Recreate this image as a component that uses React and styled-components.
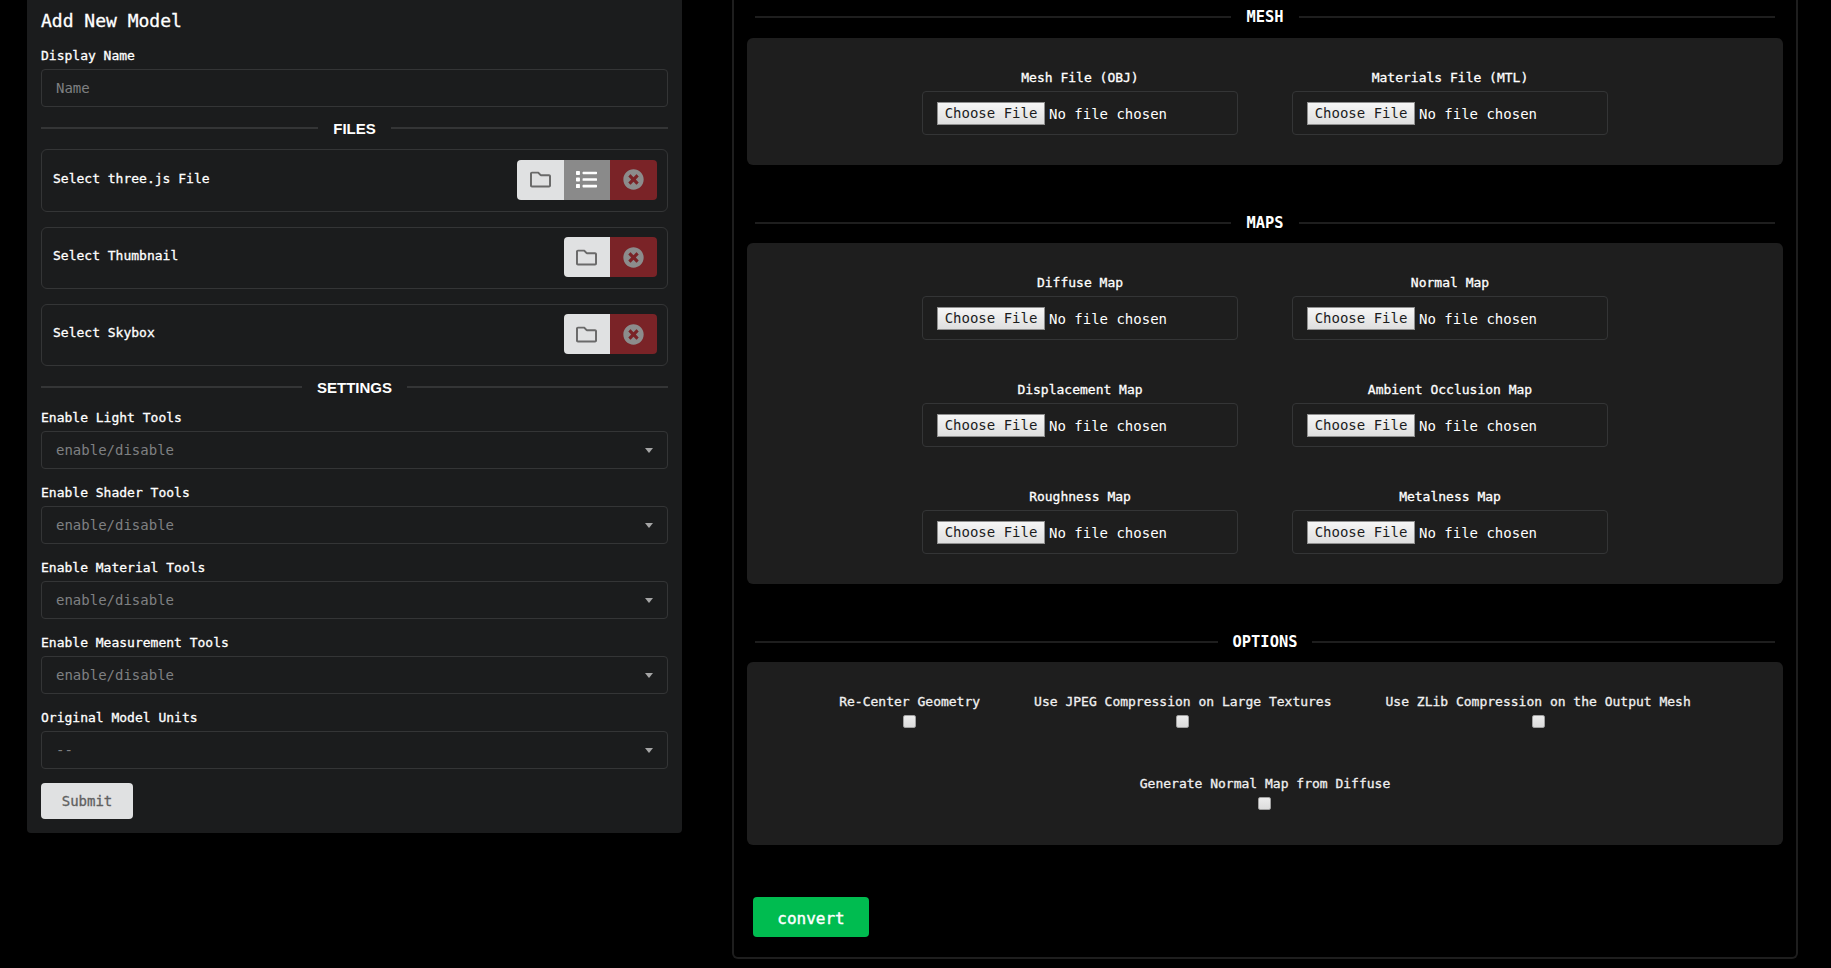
import React from "react";
import styled, { createGlobalStyle } from "styled-components";
import { FaRegFolder, FaList, FaTimesCircle } from "react-icons/fa";

const mono = `"DejaVu Sans Mono", "Liberation Mono", monospace`;

const GlobalStyle = createGlobalStyle`
  html, body {
    margin: 0;
    height: 100%;
    background: #000;
    overflow: hidden;
  }
  * {
    box-sizing: border-box;
  }
`;

const Page = styled.div`
  display: flex;
  align-items: flex-start;
  gap: 50px;
  width: 1831px;
  height: 968px;
  padding-left: 27px;
  background: #000;
  color: #fff;
  font-family: ${mono};
  font-size: 13px;
`;

const FormCard = styled.div`
  display: flex;
  flex-direction: column;
  width: 655px;
  height: 833px;
  padding: 8px 14px 14px;
  background: #1b1c1d;
  border-radius: 0 0 4px 4px;
`;

const Title = styled.h2`
  margin: 0 0 12px;
  font-size: 18px;
  line-height: 26px;
  font-weight: 400;
  -webkit-text-stroke: 0.3px #fff;
`;

const Field = styled.div`
  display: flex;
  flex-direction: column;
  margin-bottom: ${({ $gap }) => $gap ?? 14}px;
`;

const Label = styled.label`
  margin-bottom: 4px;
  padding-top: 1px;
  font-weight: 400;
  line-height: 18px;
  color: #fff;
  -webkit-text-stroke: 0.3px currentColor;
`;

const TextInput = styled.input`
  height: 38px;
  padding: 0 14px;
  background: #1b1c1d;
  border: 1px solid #343536;
  border-radius: 4px;
  color: #fff;
  font-family: ${mono};
  font-size: 14px;
  &::placeholder {
    color: #7f8082;
  }
`;

const Divider = styled.div`
  display: flex;
  align-items: center;
  gap: 15px;
  height: 18px;
  margin: ${({ $margin }) => $margin};
  &::before,
  &::after {
    content: "";
    flex: 1;
    height: 2px;
    background: ${({ $line }) => $line};
  }
`;

const DividerText = styled.span`
  font-family: ${({ $sans }) => ($sans ? `"Liberation Sans", sans-serif` : mono)};
  font-size: ${({ $sans }) => ($sans ? 15 : 15.4)}px;
  font-weight: 700;
  color: #fff;
`;

const FileRow = styled.div`
  display: flex;
  align-items: center;
  justify-content: space-between;
  height: ${({ $height }) => $height}px;
  margin-bottom: ${({ $gap }) => $gap}px;
  padding: 0 10px 2px 11px;
  border: 1px solid #343536;
  border-radius: 6px;
`;

const RowLabel = styled.span`
  padding-bottom: 3px;
  font-weight: 400;
  -webkit-text-stroke: 0.3px currentColor;
`;

const ButtonGroup = styled.div`
  display: flex;
  border-radius: 4px;
  overflow: hidden;
`;

const IconButton = styled.button`
  display: flex;
  align-items: center;
  justify-content: center;
  width: 46.7px;
  height: 40px;
  padding: 0;
  border: 0;
  font-size: 21px;
  background: ${({ $kind }) =>
    $kind === "list" ? "#8a8a8a" : $kind === "clear" ? "#7a2327" : "#e0e1e2"};
  color: ${({ $kind }) =>
    $kind === "list" ? "#fff" : $kind === "clear" ? "#8c8c8c" : "#6a6a6a"};
`;

const Select = styled.div`
  display: flex;
  align-items: center;
  justify-content: space-between;
  height: 38px;
  padding: 0 14px;
  border: 1px solid #343536;
  border-radius: 4px;
  color: #7f8082;
  font-size: 14px;
`;

const Caret = styled.span`
  width: 0;
  height: 0;
  border-left: 4px solid transparent;
  border-right: 4px solid transparent;
  border-top: 5px solid #a5a5a5;
`;

const SubmitButton = styled.button`
  width: 92px;
  height: 36px;
  padding: 0;
  background: #e0e1e2;
  border: 0;
  border-radius: 4px;
  color: #5f6060;
  font-family: ${mono};
  font-size: 14px;
  font-weight: 400;
  -webkit-text-stroke: 0.3px currentColor;
`;

const ConverterPane = styled.div`
  display: flex;
  flex-direction: column;
  width: 1066px;
  height: 959px;
  padding: 8px 13px 0;
  border: 2px solid #1e1e1e;
  border-top: 0;
  border-radius: 0 0 6px 6px;
`;

const Panel = styled.div`
  display: ${({ $wrap }) => ($wrap ? "flex" : "grid")};
  ${({ $wrap }) =>
    $wrap
      ? "flex-wrap: wrap; column-gap: 54px; row-gap: 47px;"
      : "grid-template-columns: repeat(2, 316px); column-gap: 54px; row-gap: 40px;"}
  justify-content: center;
  padding: ${({ $wrap }) => ($wrap ? "31px 0 35px" : "30px 0")};
  margin-bottom: ${({ $gap }) => $gap}px;
  background: #1e1e1e;
  border-radius: 6px;
`;

const FileField = styled.div`
  display: flex;
  flex-direction: column;
  align-items: center;
`;

const FileBox = styled.div`
  display: flex;
  align-items: center;
  align-self: stretch;
  height: 44px;
  padding: 0 14px;
  border: 1px solid #343536;
  border-radius: 4px;
`;

const FileInput = styled.input`
  width: 100%;
  color: #fff;
  font-family: ${mono};
  font-size: 14px;
  &::file-selector-button {
    width: 108px;
    height: 23px;
    margin-right: 4px;
    padding: 0;
    background: linear-gradient(#f6f6f6, #dedede);
    border: 1px solid #8f8f8f;
    border-radius: 0;
    color: #1b1c1d;
    font-family: ${mono};
    font-size: 14px;
  }
`;

const OptionField = styled.div`
  display: flex;
  flex-direction: column;
  align-items: center;
`;

const OptionLabel = styled.label`
  margin-bottom: 4px;
  font-weight: 400;
  line-height: 18px;
  color: #f0f0f0;
  -webkit-text-stroke: 0.3px currentColor;
`;

const Checkbox = styled.input`
  width: 13px;
  height: 13px;
  margin: 0;
  appearance: none;
  background: linear-gradient(#ececec, #dcdcdc);
  border: 1px solid #a0a0a0;
  border-radius: 2px;
`;

const ConvertButton = styled.button`
  align-self: flex-start;
  width: 116px;
  height: 40px;
  margin-left: 6px;
  padding: 2px 0 0;
  background: #00bc50;
  border: 0;
  border-radius: 4px;
  color: #fff;
  font-family: ${mono};
  font-size: 16px;
  font-weight: 400;
  -webkit-text-stroke: 0.4px currentColor;
`;

const SELECTS = [
  ["Enable Light Tools", "enable/disable"],
  ["Enable Shader Tools", "enable/disable"],
  ["Enable Material Tools", "enable/disable"],
  ["Enable Measurement Tools", "enable/disable"],
  ["Original Model Units", "--"],
];

const MAPS = [
  "Diffuse Map",
  "Normal Map",
  "Displacement Map",
  "Ambient Occlusion Map",
  "Roughness Map",
  "Metalness Map",
];

const OPTIONS = [
  "Re-Center Geometry",
  "Use JPEG Compression on Large Textures",
  "Use ZLib Compression on the Output Mesh",
  "Generate Normal Map from Diffuse",
];

const FilePick = ({ label }) => (
  <FileField>
    <Label>{label}</Label>
    <FileBox>
      <FileInput type="file" />
    </FileBox>
  </FileField>
);

const App = () => (
  <Page>
    <GlobalStyle />
    <FormCard>
      <Title>Add New Model</Title>
      <Field $gap={12}>
        <Label>Display Name</Label>
        <TextInput placeholder="Name" />
      </Field>
      <Divider $margin="0 0 12px" $line="#343536">
        <DividerText $sans>FILES</DividerText>
      </Divider>
      <FileRow $height={63} $gap={15}>
        <RowLabel>Select three.js File</RowLabel>
        <ButtonGroup>
          <IconButton><FaRegFolder /></IconButton>
          <IconButton $kind="list"><FaList /></IconButton>
          <IconButton $kind="clear"><FaTimesCircle /></IconButton>
        </ButtonGroup>
      </FileRow>
      <FileRow $height={62} $gap={15}>
        <RowLabel>Select Thumbnail</RowLabel>
        <ButtonGroup>
          <IconButton><FaRegFolder /></IconButton>
          <IconButton $kind="clear"><FaTimesCircle /></IconButton>
        </ButtonGroup>
      </FileRow>
      <FileRow $height={62} $gap={12}>
        <RowLabel>Select Skybox</RowLabel>
        <ButtonGroup>
          <IconButton><FaRegFolder /></IconButton>
          <IconButton $kind="clear"><FaTimesCircle /></IconButton>
        </ButtonGroup>
      </FileRow>
      <Divider $margin="0 0 12px" $line="#343536">
        <DividerText $sans>SETTINGS</DividerText>
      </Divider>
      {SELECTS.map(([label, value]) => (
        <Field key={label}>
          <Label>{label}</Label>
          <Select>
            {value}
            <Caret />
          </Select>
        </Field>
      ))}
      <SubmitButton>Submit</SubmitButton>
    </FormCard>

    <ConverterPane>
      <Divider $margin="0 8px 12px" $line="#1e1e1e">
        <DividerText>MESH</DividerText>
      </Divider>
      <Panel $gap={49}>
        <FilePick label="Mesh File (OBJ)" />
        <FilePick label="Materials File (MTL)" />
      </Panel>
      <Divider $margin="0 8px 11px" $line="#1e1e1e">
        <DividerText>MAPS</DividerText>
      </Divider>
      <Panel $gap={49}>
        {MAPS.map((label) => (
          <FilePick key={label} label={label} />
        ))}
      </Panel>
      <Divider $margin="0 8px 11px" $line="#1e1e1e">
        <DividerText>OPTIONS</DividerText>
      </Divider>
      <Panel $wrap $gap={52}>
        {OPTIONS.map((label) => (
          <OptionField key={label}>
            <OptionLabel>{label}</OptionLabel>
            <Checkbox type="checkbox" />
          </OptionField>
        ))}
      </Panel>
      <ConvertButton>convert</ConvertButton>
    </ConverterPane>
  </Page>
);

export default App;
